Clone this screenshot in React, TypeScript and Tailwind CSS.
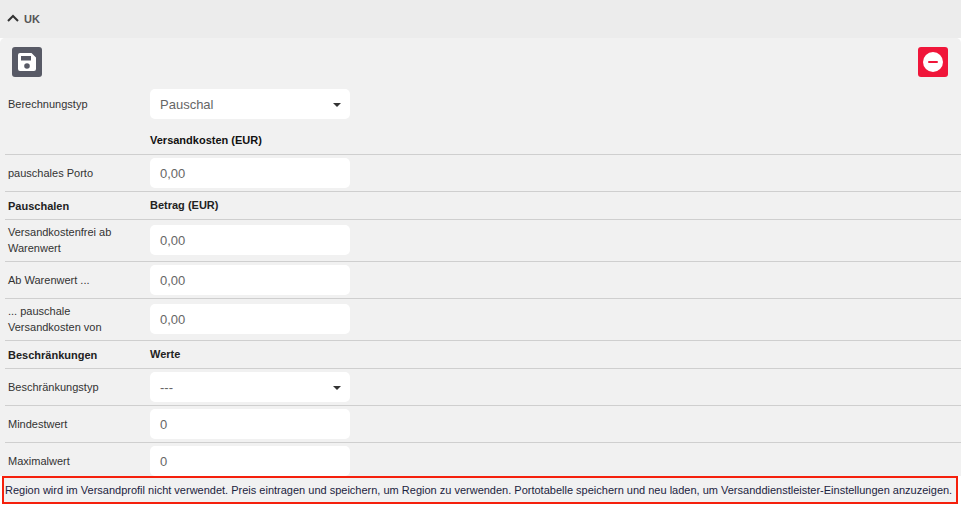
const inputBox = "flex h-[30px] w-[200px] items-center rounded-[5px] bg-white px-[10px] pt-[1px] text-[13px] text-[#666]";

function Caret() {
  return <span className="ml-auto mr-[-1px] h-0 w-0 border-x-[4px] border-t-[4px] border-x-transparent border-t-[#333]" />;
}

function Row({ label, h, bold, border = true, tall, children }: { label: React.ReactNode; h: number; bold?: boolean; border?: boolean; tall?: boolean; children: React.ReactNode }) {
  return (
    <div
      className={`flex items-center border-b ${border ? "border-[#cfcfcf]" : "border-transparent"} ${tall ? "pb-[1px]" : ""}`}
      style={{ height: h }}
    >
      <div className={`w-[145px] pl-[3px] pr-2 text-[11px] leading-[16px] ${bold ? "font-bold text-[#222]" : "text-[#333]"}`}>{label}</div>
      {children}
    </div>
  );
}

export default function App() {
  return (
    <div className="relative h-[508px] w-[961px] overflow-hidden bg-white font-['Liberation_Sans',Arial,sans-serif]">
      <div className="flex h-[38px] items-center gap-[5px] bg-[#ececec] pl-[7px] pt-[1px]">
        <svg width="12" height="8" viewBox="0 0 12 8" className="mb-[3px]">
          <path d="M1 7l5-5 5 5" fill="none" stroke="#333" strokeWidth="2" />
        </svg>
        <span className="text-[11px] font-bold text-[#555]">UK</span>
      </div>
      <div className="h-[438px] rounded-tl-[5px] rounded-tr-[5px] bg-[#f1f1f1] pl-[5px]">
        <div className="flex h-[51px] items-start justify-between pl-[7px] pr-[13px] pt-[9px]">
          <button className="flex h-[30px] w-[30px] items-center justify-center rounded-[3px] bg-[#585a66]">
            <svg width="20" height="20" viewBox="0 0 20 20">
              <path
                fill="#fff"
                fillRule="evenodd"
                d="M3 1h11.5L19 5.5V17a2 2 0 0 1-2 2H3a2 2 0 0 1-2-2V3a2 2 0 0 1 2-2zM4 4v4.5h10V4H4zm6 7.2a2.8 2.8 0 1 0 0 5.6 2.8 2.8 0 0 0 0-5.6z"
              />
            </svg>
          </button>
          <button className="flex h-[30px] w-[30px] items-center justify-center rounded-[3px] bg-[#f0163a]">
            <svg width="20" height="20" viewBox="0 0 20 20">
              <circle cx="10" cy="10" r="10" fill="#fff" />
              <rect x="5" y="9" width="10" height="2" rx="1" fill="#f0163a" />
            </svg>
          </button>
        </div>
        <div className="flex h-[30px] items-center">
          <div className="w-[145px] pl-[3px] pr-2 text-[11px] leading-[16px] text-[#333]">Berechnungstyp</div>
          <div className={inputBox}>Pauschal<Caret /></div>
        </div>
        <div className="flex h-[36px] items-center border-b border-[#cfcfcf] pl-[145px] pt-[7px] text-[11px] font-bold text-[#111]">
          Versandkosten (EUR)
        </div>
        <Row label="pauschales Porto" h={37}>
          <div className={inputBox}>0,00</div>
        </Row>
        <Row label="Pauschalen" h={28} bold>
          <span className="text-[11px] font-bold text-[#222]">Betrag (EUR)</span>
        </Row>
        <Row label="Versandkostenfrei ab Warenwert" h={42} tall>
          <div className={inputBox}>0,00</div>
        </Row>
        <Row label="Ab Warenwert ..." h={37}>
          <div className={inputBox}>0,00</div>
        </Row>
        <Row label="... pauschale Versandkosten von" h={42} tall>
          <div className={inputBox}>0,00</div>
        </Row>
        <Row label="Beschränkungen" h={28} bold>
          <span className="text-[11px] font-bold text-[#222]">Werte</span>
        </Row>
        <Row label="Beschränkungstyp" h={37}>
          <div className={inputBox}>---<Caret /></div>
        </Row>
        <Row label="Mindestwert" h={37}>
          <div className={inputBox}>0</div>
        </Row>
        <Row label="Maximalwert" h={37} border={false}>
          <div className={inputBox}>0</div>
        </Row>
      </div>
      <div className="absolute left-[2px] top-[476px] flex h-[28px] w-[956px] items-center border-2 border-[#f5200c] bg-[#f1f1f1] pl-[1px] text-[11px] text-[#1c2340]">
        Region wird im Versandprofil nicht verwendet. Preis eintragen und speichern, um Region zu verwenden. Portotabelle speichern und neu laden, um Versanddienstleister-Einstellungen anzuzeigen.
      </div>
    </div>
  );
}
